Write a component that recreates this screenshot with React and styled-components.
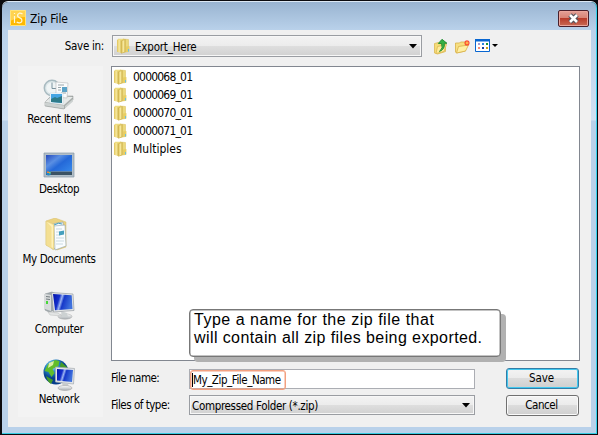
import React from "react";
import styled, { createGlobalStyle } from "styled-components";

const GlobalStyle = createGlobalStyle`
  * { box-sizing: border-box; }
  body { margin: 0; overflow: hidden; background: #000; }
  svg { display: block; flex: none; }
`;

const Window = styled.main`
  width: 598px;
  height: 435px;
  padding: 2px 1px 1px 2px;
  background: #0b0b0f;
  font: 11.5px/14px "DejaVu Sans Condensed", "DejaVu Sans", sans-serif;
  font-stretch: condensed;
  letter-spacing: -.3px;
  color: #000;
`;
const Frame = styled.div`
  height: 432px;
  padding: 0 5px 5px 6px;
  border-radius: 6px 6px 0 0;
  border-right: 1px solid #35d2ed;
  border-bottom: 1px solid #35cce2;
  background: linear-gradient(#99b4d1 0, #b9d1ea 28px, #d0e1f3 118px, #b9d1ea 119px);
  box-shadow: 0 -1px 0 #dce8f4;
`;
const TitleBar = styled.header`
  height: 28px;
  display: flex;
  align-items: flex-start;
  padding: 8px 2px 0 2px;
`;
const Title = styled.h1`
  margin: 1px auto 0 4px;
  font-size: 12px;
  line-height: 16px;
  font-weight: 400;
  letter-spacing: -.1px;
`;
const CloseButton = styled.button`
  width: 31px;
  height: 17px;
  padding: 0 0 0 7px;
  border: 1px solid #49202c;
  border-radius: 2px;
  background: linear-gradient(#e3a097 0, #d88476 45%, #b83c2b 50%, #c96b55 100%);
  box-shadow: inset 0 0 0 1px #eaa59b;
`;
const Content = styled.div`
  height: 397px;
  padding: 5px 10px 10px;
  background: #f0f0f0;
`;
const LookupBar = styled.div`
  display: flex;
  height: 31px;
`;
const LookupLabel = styled.div`
  width: 94px;
  padding: 4px 8px 0 0;
  text-align: right;
`;
const Select = styled.div`
  width: ${p => p.$width}px;
  height: ${p => p.$height}px;
  display: flex;
  align-items: center;
  padding: 0 4px 0 ${p => p.$inset}px;
  border: 1px solid #9a9da2;
  background: linear-gradient(#f3f3f3 0, #ececec 49%, #dedede 51%, #d1d1d1 100%);
  box-shadow: inset 0 0 0 1px #f7f7f7;
`;
const SelectText = styled.span`
  margin-left: ${p => p.$gap || 0}px;
  margin-right: auto;
  padding-top: 1px;
  letter-spacing: ${p => p.$tracking || 0}px;
  white-space: nowrap;
`;
const Tools = styled.div`
  display: flex;
  gap: 4px;
  padding: 3px 0 0 11px;
`;
const Columns = styled.div`
  display: grid;
  grid-template-columns: 85px 469px;
  column-gap: 8px;
`;
const Places = styled.nav`
  height: 351px;
  padding-top: 12px;
  background: #f3f3f3;
`;
const Place = styled.div`
  height: 70px;
  display: flex;
  flex-direction: column;
  align-items: center;
  padding-right: 3px;
`;
const PlaceLabel = styled.span`
  white-space: nowrap;
  letter-spacing: -.35px;
`;
const Main = styled.section`
  position: relative;
`;
const FileList = styled.ul`
  height: 295px;
  margin: 0;
  padding: 1px 1px;
  list-style: none;
  border: 1px solid #828790;
  background: #fff;
`;
const FileRow = styled.li`
  height: 18px;
  display: flex;
  align-items: center;
  gap: 4px;
  font-size: 12px;
  letter-spacing: ${p => p.$tracking}px;
`;
const Form = styled.div`
  display: grid;
  grid-template-columns: 78px 286px 73px;
  grid-template-rows: 21px 21px;
  row-gap: 6px;
  padding-top: 7px;
`;
const Label = styled.label`
  padding-top: 3px;
  white-space: nowrap;
  letter-spacing: -.5px;
`;
const NameField = styled.div`
  height: 20px;
  margin-top: 1px;
  border: 1px solid #abadb3;
  background: #fff;
`;
const Highlight = styled.div`
  width: 96px;
  height: 20px;
  padding: 2px 0 0 1px;
  border: 1px solid #f3a080;
  border-radius: 3px;
  box-shadow: inset 0 0 0 .5px #f3a080;
`;
const Typed = styled.span`
  display: block;
  height: 14px;
  border-left: 1px solid #000;
  line-height: 14px;
  letter-spacing: -.45px;
  white-space: nowrap;
`;
const Button = styled.button`
  width: 73px;
  height: 21px;
  margin-left: 31px;
  padding: 0 2px 1px 0;
  border: 1px solid ${p => (p.$primary ? "#337da7" : "#707070")};
  border-radius: 3px;
  background: linear-gradient(#f3f3f3 0, #ebebeb 48%, #dcdcdc 50%, #cfcfcf 100%);
  box-shadow: inset 0 0 0 1px ${p => (p.$primary ? "#42c8ef" : "#fafafa")};
  color: #000;
  font: inherit;
  letter-spacing: ${p => (p.$primary ? "-.15px" : "-.45px")};
`;
const Callout = styled.aside`
  position: absolute;
  left: 78px;
  top: 243px;
  width: 312px;
  height: 48px;
  padding: 1px 0 0 4px;
  border: 1px solid #777;
  border-radius: 4px;
  background: #fff;
  box-shadow: inset 0 0 0 .5px #888, 5px 5px 0 #b1b1b1;
  font: 16px/18px "Liberation Sans", Arial, sans-serif;
  white-space: nowrap;
`;
const CalloutLine = styled.div`
  letter-spacing: ${p => p.$tracking}px;
`;

const Folder = () => (
  <svg width="16" height="16" viewBox="0 0 16 16">
    <defs>
      <linearGradient id="folderFace"><stop stopColor="#dfc258" /><stop offset=".5" stopColor="#f8eaa0" /><stop offset="1" stopColor="#d3b850" /></linearGradient>
    </defs>
    <path d="M2 .7h6v14l-6-1z" fill="#eedd80" />
    <path d="M7 1l5.500.500v12L7 14.500z" fill="#ecd97c" stroke="#d8be58" strokeWidth=".5" />
    <path d="M1 1.500l4.500 1v12.700L1 13.800z" fill="url(#folderFace)" />
    <path d="M5.500 2.800L9.300 1.500v12.300l-3.800 1.500z" fill="url(#folderFace)" stroke="#c9ad48" strokeWidth=".5" />
    <path d="M10 8.500l3.400-.500v5.500L10 14z" fill="#e8ce62" />
    <path d="M12 11h1v2.500h-1z" fill="#6bbfe0" />
  </svg>
);

const Arrow = () => (
  <svg width="8" height="5" viewBox="0 0 8 5"><path d="M0 0h8L4 4.5z" /></svg>
);

const AppIcon = () => (
  <svg width="16" height="16" viewBox="0 0 16 16">
    <path d="M0 0h16v16H0z" fill="#ffb900" />
    <path d="M0 0h16v7Q8 7 0 11z" fill="#ffd350" />
    <path d="M.5.5h15v15H.5z" fill="none" stroke="#ffe37c" />
    <path d="M4.500 6v7M4.500 3v1M12.500 4Q11 3 9.300 3.200 7 4 7.800 6.500L11.500 9q1.200 3-1.400 3.800-2 .3-3.400-.8" fill="none" stroke="#fff6d8" strokeWidth="1.2" />
  </svg>
);

const UpIcon = () => (
  <svg width="17" height="17" viewBox="0 0 17 17">
    <path d="M1.500 5.500l4-1 1 1 6-1v9l-8 2.500-3-1z" fill="#f5dc79" stroke="#dcb752" strokeWidth=".8" />
    <path d="M4.500 8.500l9-2-2.500 7-8 2z" fill="#ffec9b" stroke="#dcb752" strokeWidth=".8" />
    <path d="M6.500 13.500q4-3.500 2-8H5.300L9 1.300l5 4h-2.700q1 6-4.800 8.200z" fill="#35b045" stroke="#18852a" strokeWidth=".8" />
  </svg>
);
const NewFolderIcon = () => (
  <svg width="17" height="17" viewBox="0 0 17 17">
    <path d="M1.500 5h4l1-1h5v9l-9 2-1-1z" fill="#f7df82" stroke="#d8b048" strokeWidth=".8" />
    <path d="M4.500 8.500l10-1.500-3 6-9 2z" fill="#fff0a4" stroke="#d8b048" strokeWidth=".8" />
    <path d="M13 2v6M10 5h6M11 3l4 4M15 3l-4 4" stroke="#fb5030" strokeWidth="1.2" />
    <circle cx="13" cy="5" r="1.200" fill="#ffb648" />
  </svg>
);
const ViewIcon = () => (
  <svg width="23" height="16" viewBox="0 0 23 16">
    <path d="M.5 1.500h14v12H.5z" fill="#fff" stroke="#0866d1" />
    <path d="M0 1h15v2.500H0z" fill="#0866d1" />
    {[["#a59ad0", 3, 5], ["#2685e3", 7, 5], ["#159535", 11, 5], ["#f68a73", 3, 9], ["#153e9b", 7, 9], ["#c9a21a", 11, 9]].map(([fill, x, y]) => <rect key={`${x}-${y}`} x={x} y={y} width="2" height="2" fill={fill} />)}
    <path d="M17 6h6l-3 3z" />
  </svg>
);

const PlaceDefs = () => (
  <defs>
    <linearGradient id="screen" x2="1" y2="1"><stop stopColor="#2549bd" /><stop offset=".3" stopColor="#5a8fe3" /><stop offset=".5" stopColor="#2468d8" /><stop offset="1" stopColor="#3b90ef" /></linearGradient>
    <linearGradient id="monitor" y2=".25"><stop stopColor="#0211aa" /><stop offset=".35" stopColor="#1430cb" /><stop offset=".48" stopColor="#9db5f2" /><stop offset=".6" stopColor="#1638c9" /><stop offset="1" stopColor="#3f71dd" /></linearGradient>
    <linearGradient id="silver" x2="0" y2="1"><stop stopColor="#fff" /><stop offset="1" stopColor="#a6acb0" /></linearGradient>
    <radialGradient id="globe" cx=".35" cy=".25"><stop stopColor="#bdeaff" /><stop offset=".5" stopColor="#2989c9" /><stop offset="1" stopColor="#063d8b" /></radialGradient>
  </defs>
);

const Monitor = () => (
  <g>
    <ellipse cx="22" cy="28.500" rx="7" ry="2.700" fill="url(#silver)" stroke="#aaa" strokeWidth=".5" />
    <path d="M18 23l6 2 1 4h-6z" fill="#ccd1d2" />
    <path d="M8.500 4.500l21.500 1.500 1 16.500-20.500 1.500z" fill="#e2e5e6" stroke="#989ea3" strokeWidth=".7" />
    <path d="M10 6l18.700 1.300.8 13.700-17.500 1.200z" fill="url(#monitor)" />
  </g>
);

function PlaceIcon({ kind }) {
  return (
    <svg width="32" height="34" viewBox="0 0 32 34">
      <PlaceDefs />
      {kind === "recent" && <>
        <path d="M2 24l6-6h22v4l-9 9L2 28z" fill="#a9aeac" stroke="#8d9392" strokeWidth=".5" />
        <path d="M2 24l7-6 21 1-9 8z" fill="#e7eae9" />
        <path d="M2 24.500l19 3v3L2 27.500zM22 28l8-7v2.500L22 30.500z" fill="#cdd2d1" />
        <circle cx="9" cy="10" r="7.700" fill="#dae5e8" stroke="#a8bac0" strokeWidth="1.500" />
        <circle cx="9" cy="10" r="5.700" fill="#eff4f5" />
        <path d="M9 4.500v6h4" fill="none" stroke="#7b929e" />
        <path d="M13 4l12 1-1 15-11-1z" fill="#fafbfc" stroke="#bbb" strokeWidth=".6" />
        <path d="M15 7h6M15 9.500h3M15 12h3M18 15h5" stroke="#9aa6aa" />
        <path d="M19 9h5v5h-5z" fill="#5ca3c8" />
        <path d="M7 15h13v11l-13-1z" fill="#f5fbff" stroke="#b9cbd4" strokeWidth=".4" />
        <path d="M8 16h11v9l-11-1z" fill="#45a5e4" />
        <path d="M8 21l4-2 2 1 5-2v7l-11-1z" fill="#2e7b8a" />
      </>}
      {kind === "desktop" && <>
        <path d="M1 5h30v24H1z" fill="#b2bfc8" stroke="#8799a7" strokeWidth=".7" />
        <path d="M3 7h26v20H3z" fill="url(#screen)" />
        <path d="M3 23.500h26V27H3z" fill="#3b5263" />
        <path d="M3 23.500h26" stroke="#7e94a5" strokeWidth=".6" />
        <circle cx="5.500" cy="25" r="2.500" fill="#2584c5" />
        <path d="M4 23.500h2V25H4z" fill="#f37b42" /><path d="M6 24h1.500v1.500H6z" fill="#9ad345" />
      </>}
      {kind === "documents" && <>
        <path d="M3 3l9-3 11 4v25l-9 3-11-5z" fill="#ebd381" stroke="#d8bc68" strokeWidth=".5" />
        <path d="M9 6l11-2 1 24-12 3z" fill="#f5f8fa" stroke="#849dac" strokeWidth=".6" />
        <path d="M11 8l11-1 1 21-11 4z" fill="#fafdff" stroke="#8fa3b0" strokeWidth=".6" />
        <path d="M13 11h6M13 14h4M13 17h4M13 20h8M13 23h8M13 26h7" stroke="#b5cad4" strokeWidth=".7" />
        <path d="M16 13.500l5-1v4l-5 1z" fill="#46a0bd" />
        <path d="M3 3l8 3v26L3 27z" fill="#f4df92" stroke="#dfc97a" strokeWidth=".5" />
        <path d="M4 4l6 3v23l-1.500-1V9z" fill="#fff1b8" />
        <path d="M11 7q5-3 8-1" stroke="#46a0bd" fill="none" />
      </>}
      {kind === "computer" && <>
        <path d="M2 6l7-2 4 2v16l-7 2-4-2z" fill="#a2aaae" stroke="#81888c" strokeWidth=".5" />
        <path d="M2 6l6 1v16l-6-2z" fill="#d7dadb" />
        <path d="M3 8.500l4 .500M3 11l4 .500" stroke="#737b7f" /><path d="M3 13h2v3H3z" fill="#47d838" />
        <Monitor />
        <path d="M5 24l10 1 4 3-12-1z" fill="#e3e5e5" stroke="#b8bbbb" strokeWidth=".5" />
      </>}
      {kind === "network" && <>
        <circle cx="13" cy="14" r="12.500" fill="url(#globe)" />
        <path d="M12 2L5 6 1.500 13l4 1 3 5 3-4-2-4 6-3 1-5z" fill="#61bd2a" />
        <path d="M18 4l6 5v6l-5-2-2-5zM3 18l7 4-2 4q-4-3-5-8z" fill="#459c27" />
        <path d="M6 5l5-2-1 4-5 3z" fill="#dcefa7" />
        <path d="M12.500 9l19 1.500-1 15.500-18-2z" fill="#e0e4e7" stroke="#a5abb0" strokeWidth=".7" />
        <path d="M14 11l16 1-1 12-15-1.500z" fill="url(#monitor)" />
        <path d="M19 25l6 .500 1 4h-6z" fill="#c5cacc" />
        <ellipse cx="22" cy="30" rx="7" ry="2.500" fill="url(#silver)" stroke="#aaa" strokeWidth=".6" />
      </>}
    </svg>
  );
}

const places = [
  { label: "Recent Items", kind: "recent" },
  { label: "Desktop", kind: "desktop" },
  { label: "My Documents", kind: "documents" },
  { label: "Computer", kind: "computer" },
  { label: "Network", kind: "network" },
];
const folders = [
  { name: "0000068_01", tracking: -0.8 },
  { name: "0000069_01", tracking: -0.8 },
  { name: "0000070_01", tracking: -0.8 },
  { name: "0000071_01", tracking: -0.8 },
  { name: "Multiples", tracking: 0 },
];

export default function App() {
  return (
    <Window>
      <GlobalStyle />
      <Frame>
        <TitleBar>
          <AppIcon />
          <Title>Zip File</Title>
          <CloseButton aria-label="Close">
            <svg width="15" height="13" viewBox="0 0 15 13"><path d="M4 3l7 7M11 3l-7 7" stroke="#52525a" strokeWidth="4.800" /><path d="M4 3l7 7M11 3l-7 7" stroke="#fff" strokeWidth="2.600" /></svg>
          </CloseButton>
        </TitleBar>
        <Content>
          <LookupBar>
            <LookupLabel>Save in:</LookupLabel>
            <Select $width={310} $height={22} $inset={3}><Folder /><SelectText $gap={3} $tracking={-0.2}>Export_Here</SelectText><Arrow /></Select>
            <Tools><UpIcon /><NewFolderIcon /><ViewIcon /></Tools>
          </LookupBar>
          <Columns>
            <Places>
              {places.map(p => <Place key={p.kind}><PlaceIcon kind={p.kind} /><PlaceLabel>{p.label}</PlaceLabel></Place>)}
            </Places>
            <Main>
              <FileList>{folders.map(f => <FileRow key={f.name} $tracking={f.tracking}><Folder />{f.name}</FileRow>)}</FileList>
              <Form>
                <Label>File name:</Label>
                <NameField><Highlight><Typed>My_Zip_File_Name</Typed></Highlight></NameField>
                <Button $primary>Save</Button>
                <Label>Files of type:</Label>
                <Select $width={286} $height={20} $inset={2}><SelectText $tracking={-0.33}>Compressed Folder (*.zip)</SelectText><Arrow /></Select>
                <Button>Cancel</Button>
              </Form>
              <Callout>
                <CalloutLine $tracking={0.52}>Type a name for the zip file that</CalloutLine>
                <CalloutLine $tracking={0.41}>will contain all zip files being exported.</CalloutLine>
              </Callout>
            </Main>
          </Columns>
        </Content>
      </Frame>
    </Window>
  );
}
